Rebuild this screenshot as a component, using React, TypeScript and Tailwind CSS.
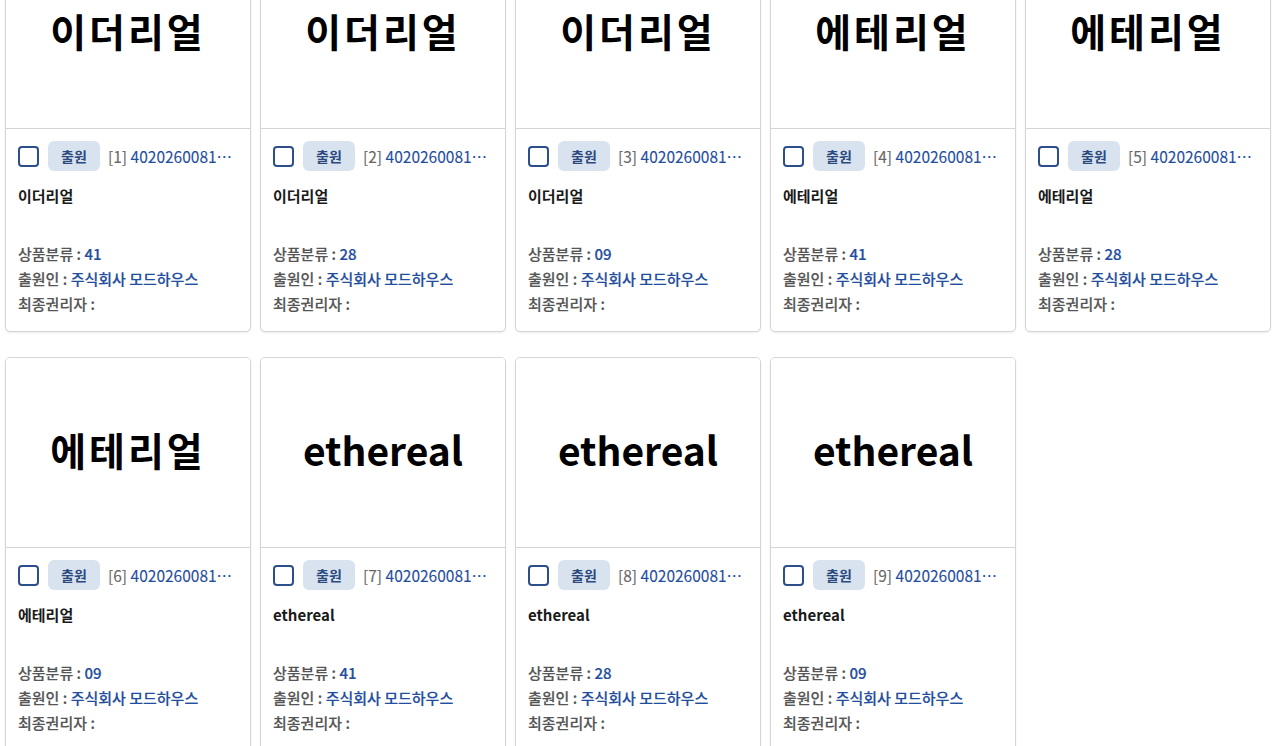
import React from "react";

type Item = { n: number; img: string; title: string; cls: string };

const items: Item[] = [
  { n: 1, img: "이더리얼", title: "이더리얼", cls: "41" },
  { n: 2, img: "이더리얼", title: "이더리얼", cls: "28" },
  { n: 3, img: "이더리얼", title: "이더리얼", cls: "09" },
  { n: 4, img: "에테리얼", title: "에테리얼", cls: "41" },
  { n: 5, img: "에테리얼", title: "에테리얼", cls: "28" },
  { n: 6, img: "에테리얼", title: "에테리얼", cls: "09" },
  { n: 7, img: "ethereal", title: "ethereal", cls: "41" },
  { n: 8, img: "ethereal", title: "ethereal", cls: "28" },
  { n: 9, img: "ethereal", title: "ethereal", cls: "09" },
];

const font = { fontFamily: '"Noto Sans CJK KR", "Noto Sans", sans-serif' };

function Card({ it }: { it: Item }) {
  const latin = /^[a-z]/.test(it.img);
  return (
    <div className="flex flex-col overflow-hidden rounded-[5px] border border-[#d5d5d5] bg-white shadow-[0_1px_2px_rgba(0,0,0,0.08)]">
      <div className="flex h-[190px] items-center justify-center border-b border-[#d5d5d5] bg-white pb-[6px]">
        <span
          className={
            latin
              ? "text-[39px] font-bold leading-none text-black"
              : "text-[39px] font-bold leading-none tracking-[3px] text-black"
          }
          style={font}
        >
          {it.img}
        </span>
      </div>
      <div className="flex h-[202px] flex-col px-3 pt-3 text-[15px]">
        <div className="flex h-[30px] items-center">
          <span className="h-[21px] w-[21px] shrink-0 rounded-[4px] border-2 border-[#2c4f8c] bg-white" />
          <span className="ml-[9px] flex h-[30px] w-[52px] shrink-0 items-center justify-center rounded-[6px] bg-[#d9e3ef] text-[14px] font-bold text-[#2b4a7e]">
            출원
          </span>
          <span className="ml-2 whitespace-nowrap text-[15.5px] leading-[30px] [-webkit-text-stroke:0.1px]">
            <span className="text-[#666]">[{it.n}] </span>
            <span className="text-[#1f4e9e]">4020260081…</span>
          </span>
        </div>
        <div className="mt-[12px] h-[25px] text-[15px] font-bold leading-[25px] text-[#1a1a1a]">{it.title}</div>
        <div className="mt-[33px] flex flex-col leading-[25px] [-webkit-text-stroke:0.18px]">
          <div>
            <span className="font-medium text-[#555]">상품분류 : </span>
            <span className="font-medium text-[#1f4e9e]">{it.cls}</span>
          </div>
          <div>
            <span className="font-medium text-[#555]">출원인 : </span>
            <span className="font-medium text-[#1f4e9e]">주식회사 모드하우스</span>
          </div>
          <div>
            <span className="font-medium text-[#555]">최종권리자 : </span>
          </div>
        </div>
      </div>
    </div>
  );
}

export default function App() {
  return (
    <div className="h-[746px] w-[1280px] overflow-hidden bg-white" style={font}>
      <div className="mt-[-62px] grid grid-cols-[repeat(5,246px)] gap-x-[9px] gap-y-[25px] pl-[5px]">
        {items.map((it) => (
          <Card key={it.n} it={it} />
        ))}
      </div>
    </div>
  );
}
